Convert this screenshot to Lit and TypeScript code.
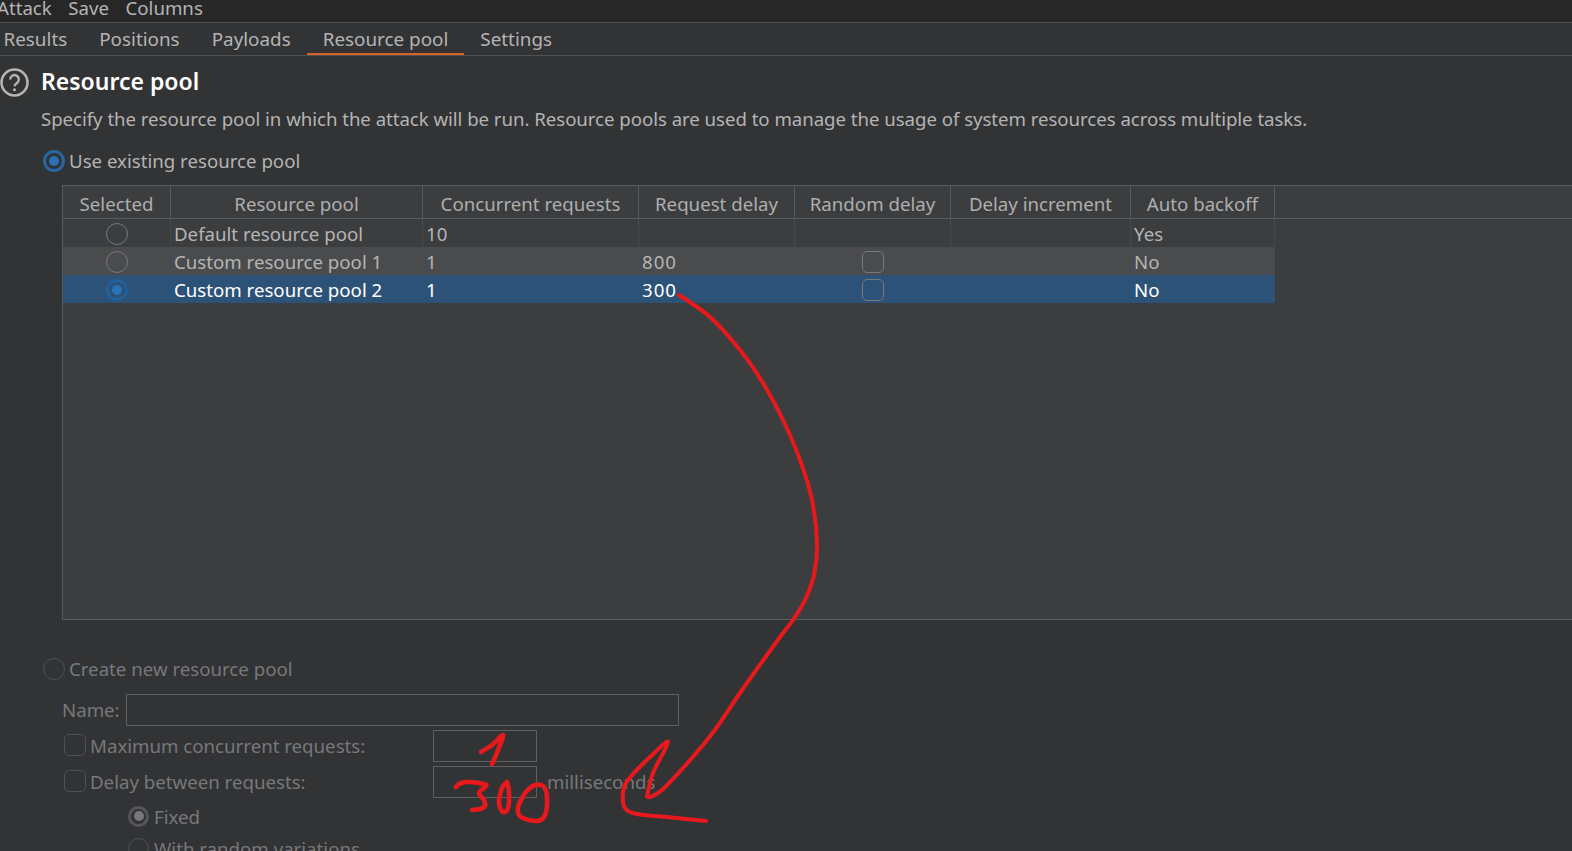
import { LitElement, html, css, svg } from 'lit';
import { customElement } from 'lit/decorators.js';
import { classMap } from 'lit/directives/class-map.js';

type Pt = [number, number];

// turn hand-read points into a smooth line (catmull-rom to bezier)
function smooth(p: Pt[]): string {
  let d = `M${p[0][0]} ${p[0][1]}`;
  for (let i = 0; i < p.length - 1; i++) {
    const a = p[Math.max(i - 1, 0)], b = p[i], c = p[i + 1], e = p[Math.min(i + 2, p.length - 1)];
    const c1x = b[0] + (c[0] - a[0]) / 6, c1y = b[1] + (c[1] - a[1]) / 6;
    const c2x = c[0] - (e[0] - b[0]) / 6, c2y = c[1] - (e[1] - b[1]) / 6;
    d += ` C${c1x.toFixed(1)} ${c1y.toFixed(1)} ${c2x.toFixed(1)} ${c2y.toFixed(1)} ${c[0]} ${c[1]}`;
  }
  return d;
}

const ARROW: Pt[] = [[679, 295], [710, 317], [740, 350], [763, 383], [783, 420], [800, 460], [812, 500], [817, 543],
  [814, 575], [805, 600], [793, 620], [780, 637], [767, 655], [740, 693], [717, 727], [703, 745], [683, 768], [662, 790], [650, 797],
  [647, 796]];
const ARROW_HEAD: Pt[] = [[647, 796], [653, 773], [668, 742], [650, 757], [628, 780], [623, 793], [625, 808], [637, 814], [667, 817], [706, 821]];
const ONE: Pt[] = [[481, 752], [492, 745], [503, 735], [498, 750], [492, 764]];
const THREE: Pt[] = [[456, 787], [461, 783], [470, 782], [484, 784], [486, 786], [479, 793], [484, 800], [485, 806], [480, 809], [472, 810]];
const ZERO_A: Pt[] = [[507, 782], [502, 788], [499, 803], [503, 812], [508, 808], [509, 792], [507, 782]];
const ZERO_B: Pt[] = [[525, 793], [518, 807], [521, 817], [537, 821], [545, 815], [547, 797], [543, 786], [533, 786], [525, 793]];

interface Pool {
  name: string;
  concurrent: string;
  delay: string;
  random: boolean;
  backoff: string;
  selected?: boolean;
  alt?: boolean;
}

const POOLS: Pool[] = [
  { name: 'Default resource pool', concurrent: '10', delay: '', random: false, backoff: 'Yes' },
  { name: 'Custom resource pool 1', concurrent: '1', delay: '800', random: true, backoff: 'No', alt: true },
  { name: 'Custom resource pool 2', concurrent: '1', delay: '300', random: true, backoff: 'No', selected: true },
];

const HEADERS = ['Selected', 'Resource pool', 'Concurrent requests', 'Request delay', 'Random delay', 'Delay increment', 'Auto backoff'];

@customElement('app-root')
export class AppRoot extends LitElement {
  static styles = css`
    :host {
      display: block;
      position: relative;
      width: 1572px;
      height: 851px;
      overflow: hidden;
      background: #323335;
      color: #b4b4b4;
      font-family: 'Noto Sans', sans-serif;
      font-size: 18.67px;
    }
    .menu {
      display: flex;
      gap: 16.5px;
      height: 16px;
      padding: 0 0 6px;
      margin-left: -3px;
      background: #272727;
      border-bottom: 1px solid #4f5052;
      line-height: 16px;
    }
    .tabs {
      display: flex;
      height: 32px;
      border-bottom: 1px solid #4f5052;
      line-height: 32px;
      font-size: 18.85px;
    }
    .tab {
      padding: 0 16px;
      box-sizing: border-box;
    }
    .tab:first-child {
      padding-left: 3.5px;
    }
    .tab.active {
      border-bottom: 2px solid #d8622c;
    }
    .title {
      display: flex;
      align-items: center;
      gap: 12px;
      height: 29px;
      margin-top: 12px;
    }
    .title h1 {
      margin: 0 0 3px;
      font-size: 23px;
      font-weight: 600;
      color: #fff;
    }
    .desc {
      margin: 9px 0 0 41px;
      line-height: 26px;
      letter-spacing: -0.05px;
    }
    .choice {
      display: flex;
      align-items: center;
      gap: 4px;
      margin-left: 43px;
      height: 23px;
    }
    .choice.use {
      margin-top: 17px;
    }
    .choice.create {
      margin-top: 37px;
      color: #77787a;
    }
    .radio {
      box-sizing: border-box;
      flex: none;
      width: 22px;
      height: 22px;
      border-radius: 50%;
      border: 1.8px solid #77787a;
      display: flex;
      align-items: center;
      justify-content: center;
    }
    .radio.on {
      border: 3px solid #2867a3;
    }
    .radio.on::after {
      content: '';
      width: 10px;
      height: 10px;
      border-radius: 50%;
      background: #2a72b5;
    }
    .radio.off {
      border-color: #4f5052;
    }
    .table {
      margin: 13px 0 0 62px;
      height: 433px;
      background: #3c3d3f;
      border: 1px solid #5a5b5d;
      border-right: 0;
    }
    .row {
      display: grid;
      grid-template-columns: 108px 252px 216px 156px 156px 180px 144px;
      width: 1212px;
      height: 28px;
      line-height: 30px;
    }
    .head {
      width: auto;
      height: 32px;
      line-height: 35px;
      border-bottom: 1px solid #5a5b5d;
      color: #aeaeae;
    }
    .head span {
      text-align: center;
      border-right: 1px solid #5a5b5d;
      white-space: nowrap;
      height: 32px;
    }
    .cell {
      padding-left: 3px;
      border-right: 1px solid #47484a;
      white-space: nowrap;
    }
    .cell.mid {
      padding: 0;
      display: flex;
      align-items: center;
      justify-content: center;
    }
    .cell.delay {
      letter-spacing: 1px;
    }
    .row.alt {
      background: #4a4b4c;
    }
    .row.alt .cell,
    .row.sel .cell {
      border-right-color: transparent;
    }
    .row.sel {
      background: #2d5278;
      color: #fff;
    }
    .row.sel .radio.on {
      border-color: #20609b;
    }
    .check {
      box-sizing: border-box;
      flex: none;
      width: 22px;
      height: 22px;
      border-radius: 5px;
      border: 1.8px solid #77787a;
    }
    .form {
      margin-left: 62px;
      color: #77787a;
    }
    .name {
      display: flex;
      align-items: center;
      gap: 6px;
      margin-top: 14px;
      height: 32px;
    }
    .name span {
      margin-bottom: 2px;
    }
    .field {
      box-sizing: border-box;
      height: 32px;
      border: 1px solid #5f6062;
    }
    .name .field {
      width: 553px;
    }
    .opt {
      display: grid;
      grid-template-columns: 371px 104px auto;
      align-items: center;
      margin-top: 4px;
      height: 32px;
    }
    .opt label {
      display: flex;
      align-items: center;
      gap: 4px;
      margin: 0 0 2px 2px;
    }
    .opt .check {
      border-color: #4f5052;
    }
    .unit {
      margin: 0 0 2px 10px;
    }
    .sub {
      display: flex;
      align-items: center;
      gap: 5px;
      margin: 7px 0 0 66px;
      height: 22px;
    }
    .sub + .sub {
      margin-top: 10px;
    }
    .sub .radio {
      width: 21px;
      height: 21px;
    }
    .sub .radio.on {
      border-color: #55565a;
    }
    .sub .radio.on::after {
      background: #77787a;
    }
    .ink {
      position: absolute;
      left: 0;
      top: 0;
      pointer-events: none;
    }
    .ink path {
      fill: none;
      stroke: #e8191c;
      stroke-width: 4;
      stroke-linecap: round;
      stroke-linejoin: round;
    }
    .ink path.digit {
      stroke-width: 4.6;
    }
  `;

  renderPool(p: Pool) {
    return html`
      <div class=${classMap({ row: true, alt: !!p.alt, sel: !!p.selected })}>
        <div class="cell mid"><span class=${classMap({ radio: true, on: !!p.selected })}></span></div>
        <div class="cell">${p.name}</div>
        <div class="cell">${p.concurrent}</div>
        <div class="cell delay">${p.delay}</div>
        <div class="cell mid">${p.random ? html`<span class="check"></span>` : ''}</div>
        <div class="cell"></div>
        <div class="cell">${p.backoff}</div>
      </div>
    `;
  }

  render() {
    return html`
      <div class="menu"><span>Attack</span><span>Save</span><span>Columns</span></div>
      <div class="tabs">
        <div class="tab">Results</div>
        <div class="tab">Positions</div>
        <div class="tab">Payloads</div>
        <div class="tab active">Resource pool</div>
        <div class="tab">Settings</div>
      </div>
      <div class="title">
        <svg width="29" height="29" viewBox="0 0 29 29">
          <circle cx="14.5" cy="14.5" r="13" fill="none" stroke="#b4b4b4" stroke-width="2.6"></circle>
          <path d="M10.2 11.4a4.3 4.3 0 1 1 6.8 3.5c-1.6 1.1-2.5 1.9-2.5 3.4" fill="none" stroke="#b4b4b4" stroke-width="2.4"></path>
          <circle cx="14.5" cy="21.8" r="1.5" fill="#b4b4b4"></circle>
        </svg>
        <h1>Resource pool</h1>
      </div>
      <div class="desc">Specify the resource pool in which the attack will be run. Resource pools are used to manage the usage of system resources across multiple tasks.</div>
      <div class="choice use"><span class="radio on"></span>Use existing resource pool</div>
      <div class="table">
        <div class="row head">${HEADERS.map((h) => html`<span>${h}</span>`)}</div>
        ${POOLS.map((p) => this.renderPool(p))}
      </div>
      <div class="choice create"><span class="radio off"></span>Create new resource pool</div>
      <div class="form">
        <div class="name"><span>Name:</span><div class="field"></div></div>
        <div class="opt">
          <label><span class="check"></span>Maximum concurrent requests:</label>
          <div class="field"></div>
        </div>
        <div class="opt">
          <label><span class="check"></span>Delay between requests:</label>
          <div class="field"></div>
          <span class="unit">milliseconds</span>
        </div>
        <div class="sub"><span class="radio on"></span>Fixed</div>
        <div class="sub"><span class="radio off"></span>With random variations</div>
      </div>
      <svg class="ink" width="1572" height="851" viewBox="0 0 1572 851">
        ${[ARROW, ARROW_HEAD].map((p) => svg`<path d=${smooth(p)}></path>`)}
        ${[ONE, THREE, ZERO_A, ZERO_B].map((p) => svg`<path class="digit" d=${smooth(p)}></path>`)}
      </svg>
    `;
  }
}
